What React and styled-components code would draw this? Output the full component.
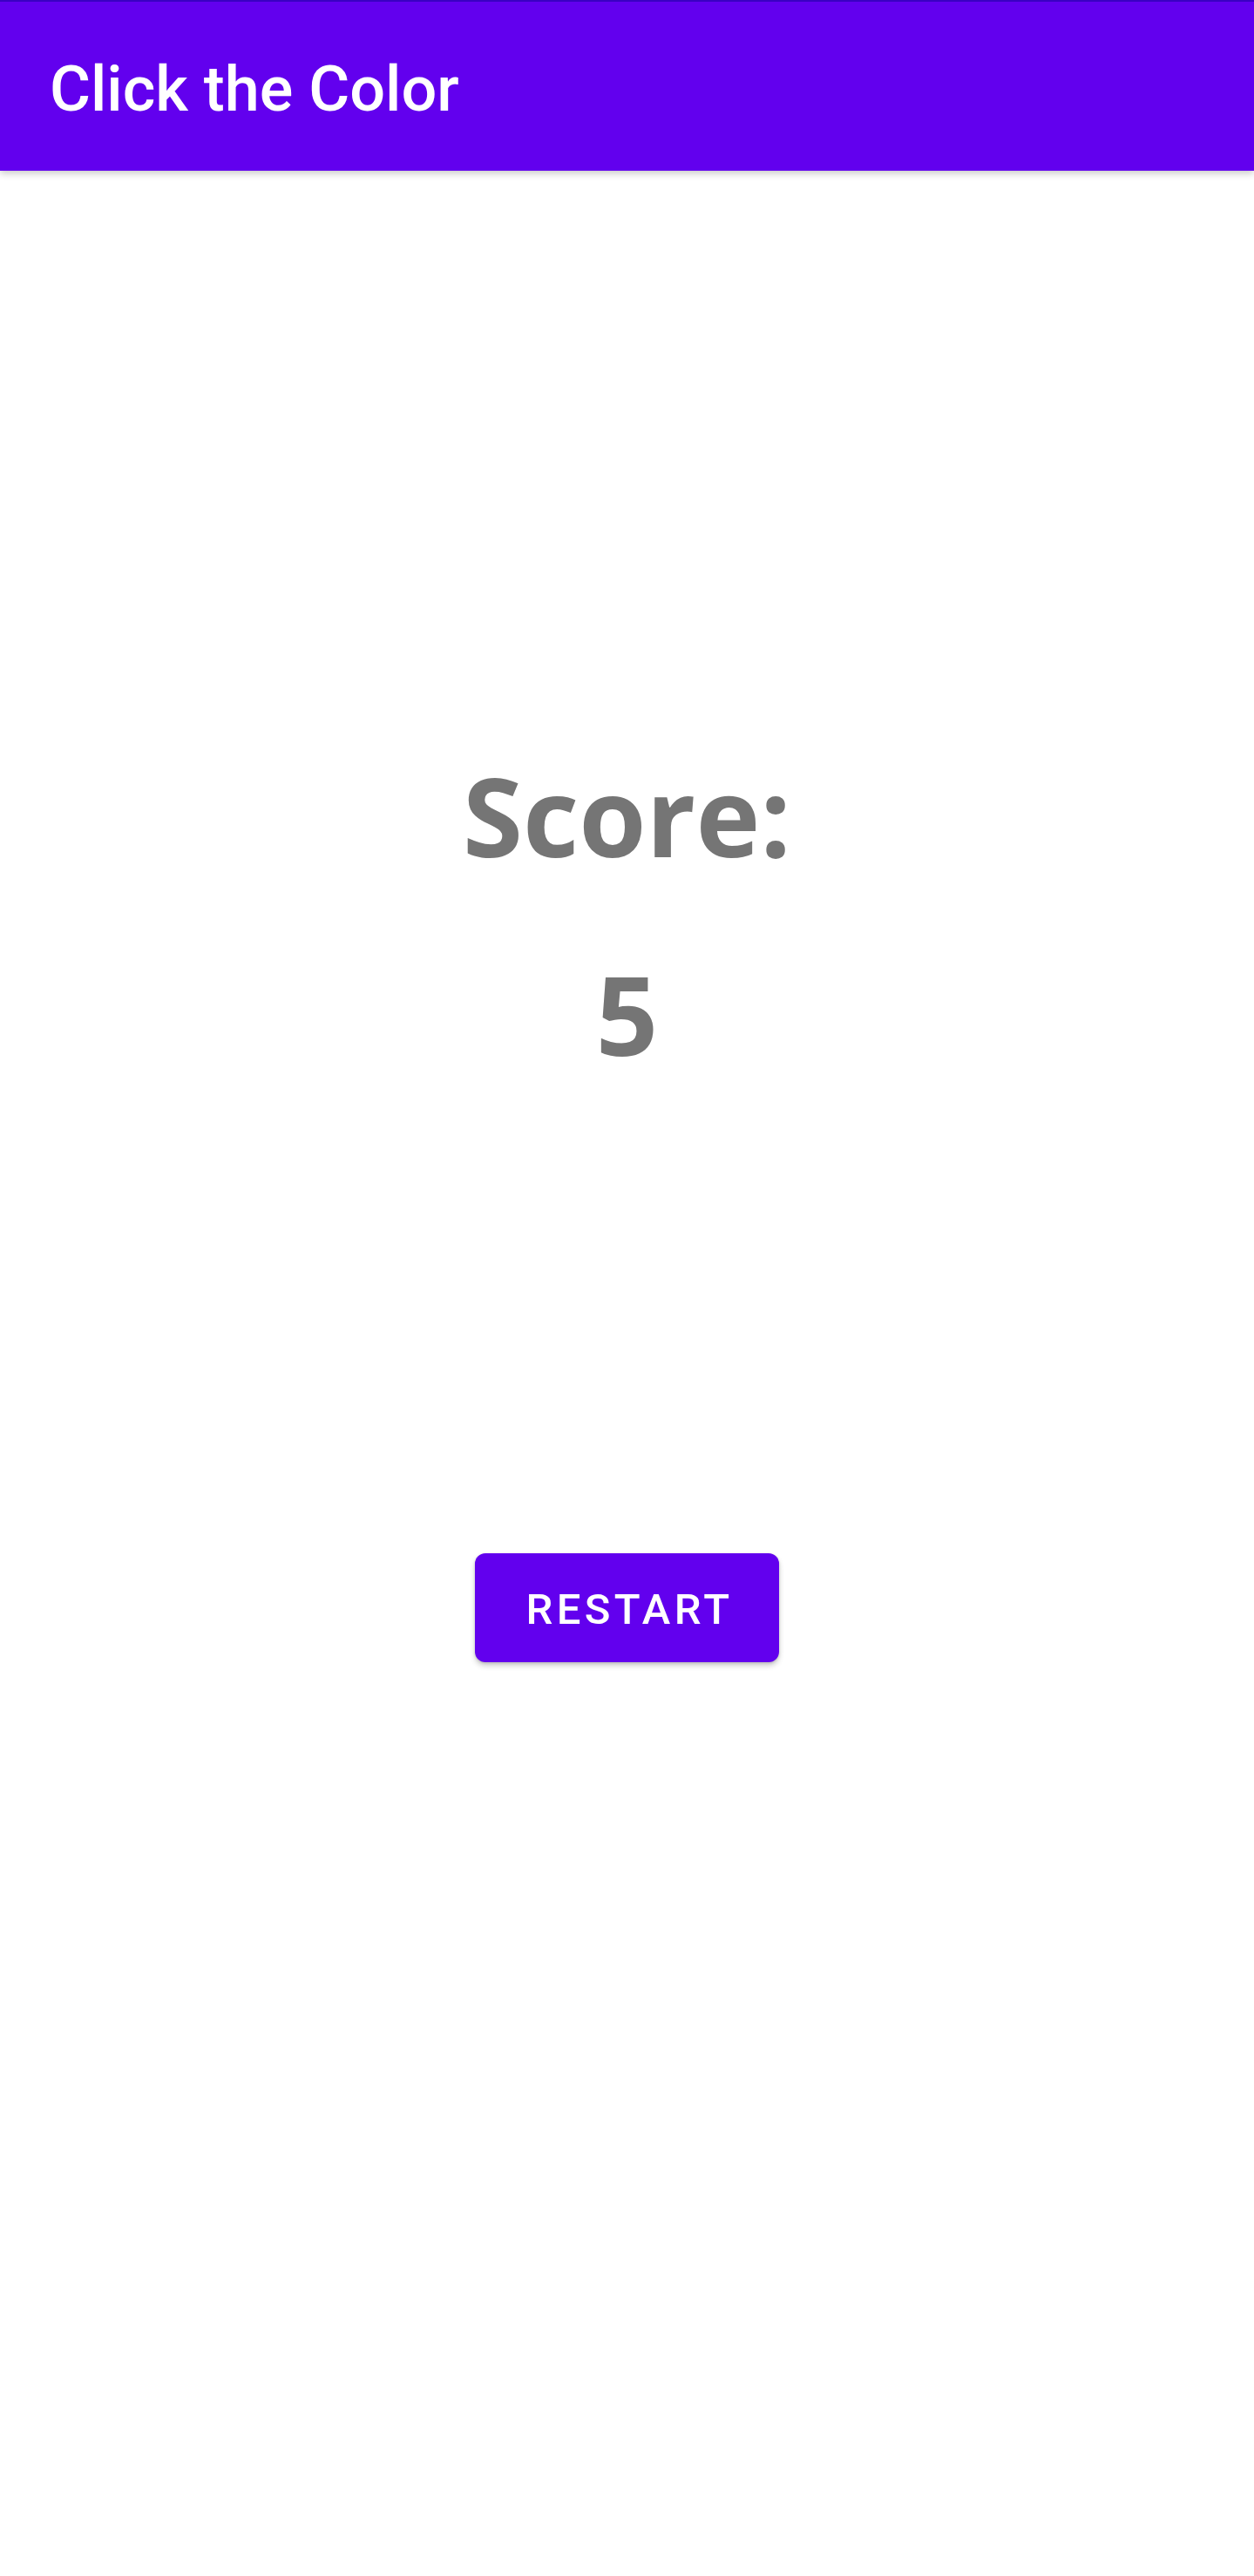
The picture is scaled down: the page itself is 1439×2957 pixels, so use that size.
import React from 'react'
import styled, { createGlobalStyle } from 'styled-components'

const GlobalStyle = createGlobalStyle`
  html, body {
    margin: 0;
    padding: 0;
    background: #ffffff;
  }
  body {
    font-family: Roboto, 'Noto Sans', sans-serif;
  }
`

const Screen = styled.div`
  min-height: 2957px;
  display: flex;
  flex-direction: column;
  background: #ffffff;
`

const AppBar = styled.header`
  height: 194px;
  border-top: 2px solid #3a00c2;
  background: #6200ee;
  display: flex;
  align-items: center;
  padding-left: 57px;
  box-shadow: 0 3px 8px rgba(0, 0, 0, 0.22);
  position: relative;
  z-index: 1;
`

const Title = styled.h1`
  margin: 0;
  font-family: Roboto, sans-serif;
  font-weight: 500;
  font-size: 72px;
  line-height: 1;
  color: #ffffff;
  transform: translateY(4px);
`

const Content = styled.main`
  display: flex;
  flex-direction: column;
  align-items: center;
  padding-top: 653px;
`

const ScoreText = styled.div`
  font-family: 'Open Sans', sans-serif;
  font-weight: 700;
  font-size: 125px;
  line-height: 174px;
  color: #757575;
  margin-top: ${p => p.gap || 0}px;
`

const RestartButton = styled.button`
  margin-top: 532px;
  width: 349px;
  height: 125px;
  padding: 4px 0 0 6px;
  border: none;
  border-radius: 12px;
  background: #6200ee;
  color: #ffffff;
  font-family: Roboto, sans-serif;
  font-weight: 500;
  font-size: 49px;
  letter-spacing: 4.4px;
  text-transform: uppercase;
  box-shadow: 0 4px 6px rgba(0, 0, 0, 0.2), 0 1px 3px rgba(0, 0, 0, 0.15);
  cursor: pointer;
`

const App = () => {
  return (
    <>
      <GlobalStyle />
      <Screen>
        <AppBar>
          <Title>Click the Color</Title>
        </AppBar>
        <Content>
          <ScoreText>Score:</ScoreText>
          <ScoreText gap={54}>5</ScoreText>
          <RestartButton>Restart</RestartButton>
        </Content>
      </Screen>
    </>
  )
}

export default App
